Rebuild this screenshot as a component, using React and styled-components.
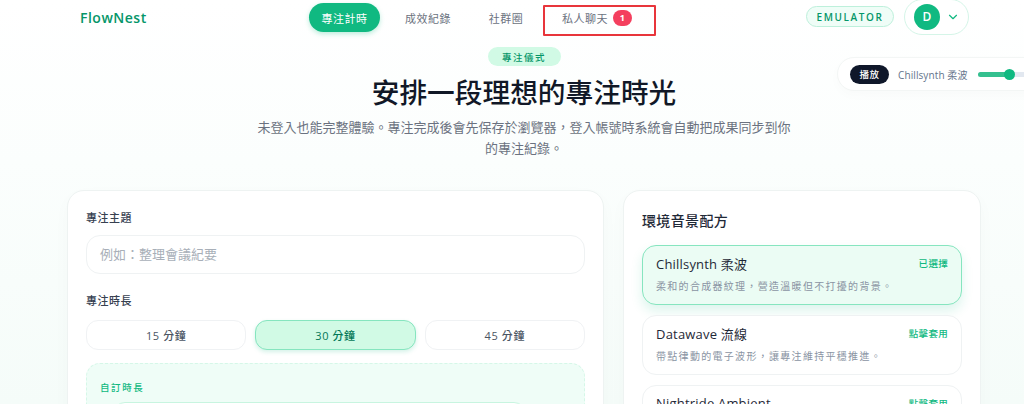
import React from 'react';
import styled, { createGlobalStyle } from 'styled-components';

const Global = createGlobalStyle`
  html, body { margin: 0; padding: 0; height: 404px; overflow: hidden; background: #fff; }
  * { box-sizing: border-box; }
  body { font-family: "Open Sans", "Noto Sans CJK TC", sans-serif; color: #1f2937; }
`;

const Page = styled.div`
  position: relative; width: 1024px; height: 404px; overflow: hidden;
  background: linear-gradient(180deg, #ffffff 0%, #fbfefd 40%, #f5fcf9 100%);
`;
const Header = styled.header`
  display: flex; align-items: center; height: 35px; padding: 0 55px 0 80px;
`;
const Logo = styled.div`
  width: 229px; font-size: 14px; font-weight: 600; color: #059669; letter-spacing: .5px;
`;
const Nav = styled.nav`display: flex; align-items: center; gap: 0;`;
const NavItem = styled.a`
  display: flex; align-items: center; justify-content: center; gap: 5px;
  height: 29px; border-radius: 15px; font-size: 11px; letter-spacing: .5px;
  width: ${p => p.$w}px; margin-right: ${p => p.$mr || 0}px;
  color: ${p => p.$active ? '#fff' : '#6b7280'};
  background: ${p => p.$active ? '#10b981' : 'transparent'};
  box-shadow: ${p => p.$active ? '0 2px 5px rgba(16,185,129,.28)' : 'none'};
`;
const Count = styled.span`
  width: 19px; height: 16px; border-radius: 8px; background: #f43f5e; color: #fff;
  font-size: 9px; font-weight: 700; display: flex; align-items: center; justify-content: center;
`;
const Right = styled.div`display: flex; align-items: center; gap: 10px; margin-left: auto;`;
const Emulator = styled.div`
  height: 21px; width: 88px; margin-top: -2px; display: flex; align-items: center; justify-content: center;
  border: 1px solid #bdf0db; border-radius: 11px; background: #effdf7;
  color: #059669; font-size: 10px; font-weight: 600; letter-spacing: 1.6px;
`;
const UserButton = styled.div`
  height: 36px; width: 65px; margin-top: -1px; border: 1px solid #d5f5e8; border-radius: 18px; background: #fff;
  display: flex; align-items: center; gap: 6px; padding-left: 9px; color: #10b981;
`;
const Avatar = styled.div`
  width: 26px; height: 26px; margin-top: -1px; border-radius: 50%; background: #10b981; color: #fff;
  display: flex; align-items: center; justify-content: center; font-size: 12px; font-weight: 600;
`;
const Marker = styled.div`
  position: absolute; left: 543px; top: 5px; width: 113px; height: 31px;
  border: 2px solid #e8353b; border-radius: 1px;
`;
const Player = styled.div`
  position: absolute; left: 837px; top: 57px; width: 240px; height: 34px;
  display: flex; align-items: center; padding-left: 12px; gap: 9px;
  border: 1px solid #f3f6f5; border-radius: 17px; background: #fff;
  box-shadow: 0 4px 12px rgba(15,23,42,.02);
`;
const PlayButton = styled.div`
  width: 39px; height: 19px; border-radius: 10px; background: #0f172a; color: #fff;
  display: flex; align-items: center; justify-content: center; font-size: 9.5px; font-weight: 500; letter-spacing: .5px;
`;
const PlayerName = styled.span`width: 71px; font-size: 10px; letter-spacing: .1px; color: #64748b; white-space: nowrap;`;
const Track = styled.div`
  position: relative; width: 90px; height: 5px; border-radius: 3px; background: #e2e8f0; flex: none;
  &::before { content: ""; position: absolute; left: 0; top: 0; bottom: 0; width: 32px; border-radius: 3px; background: #34c08f; }
  &::after { content: ""; position: absolute; left: 26px; top: -3px; width: 11px; height: 11px; border-radius: 50%; background: #10b981; }
`;
const Hero = styled.section`
  display: flex; flex-direction: column; align-items: center; padding: 12px 0 0 24px;
`;
const Pill = styled.div`
  width: 73px; height: 19px; border-radius: 10px; background: #d1fae5; color: #059669;
  display: flex; align-items: center; justify-content: center; font-size: 9.5px; font-weight: 500; letter-spacing: 1.5px;
`;
const Title = styled.h1`
  margin: 6px 0 0; font-size: 27.7px; line-height: 40px; font-weight: 500; color: #111827;
`;
const Lead = styled.p`
  margin: 5px 0 0; width: 540px; text-align: center; font-size: 13px; line-height: 20.5px; color: #6b7280;
`;
const Columns = styled.main`
  display: grid; grid-template-columns: 537px 358px; gap: 19px; padding: 0 0 0 67px; margin-top: 32px;
`;
const Card = styled.div`
  height: 300px; border: 1px solid #eef3f2; border-radius: 17px; background: #fff;
  padding: ${p => p.$pad};
  box-shadow: 0 6px 18px rgba(15,23,42,.025);
`;
const Label = styled.div`
  font-size: 11px; line-height: 16px; font-weight: 500; color: #374151; letter-spacing: .5px;
  margin-bottom: ${p => p.$mb}px;
`;
const Input = styled.div`
  height: 39px; border: 1px solid #eff2f3; border-radius: 14px; padding: 0 0 2px 13px;
  display: flex; align-items: center; font-size: 13px; color: #a8afb8;
  margin-bottom: 19px;
`;
const Durations = styled.div`display: grid; grid-template-columns: repeat(3, 1fr); gap: 9px;`;
const Duration = styled.div`
  height: 30px; border-radius: 12px; font-size: 11px; letter-spacing: .6px; font-weight: 500;
  display: flex; align-items: center; justify-content: center;
  border: 1px solid ${p => p.$on ? '#86e5bf' : '#f0f2f4'};
  background: ${p => p.$on ? '#d1fae5' : '#fff'};
  color: ${p => p.$on ? '#047857' : '#4b5563'};
  box-shadow: ${p => p.$on ? '0 2px 4px rgba(16,185,129,.18)' : 'none'};
`;
const Custom = styled.div`
  margin-top: 13px; height: 120px; border: 1px dashed #d5f7e8; border-radius: 14px;
  background: #effdf7; padding: 17px 13px;
`;
const CustomLabel = styled.div`font-size: 9.5px; line-height: 14px; font-weight: 500; color: #10b981; letter-spacing: 1.6px;`;
const CustomField = styled.div`
  margin-top: 7px; margin-left: 13px; height: 40px; width: 413px; border: 1px solid #c8f5e0; border-radius: 12px; background: #fff;
`;
const SideTitle = styled.h2`
  margin: 0 0 14px; font-size: 14px; line-height: 20px; font-weight: 500; color: #1f2937; letter-spacing: .35px;
`;
const Recipes = styled.div`display: flex; flex-direction: column; gap: 10px;`;
const Recipe = styled.div`
  height: 60px; border-radius: 14px; padding: 7px 13px;
  border: 1px solid ${p => p.$on ? '#86e5bf' : '#eff2f3'};
  background: ${p => p.$on ? '#ebfcf4' : '#fff'};
  box-shadow: ${p => p.$on ? '0 6px 12px rgba(16,185,129,.14)' : 'none'};
`;
const RecipeTop = styled.div`display: flex; justify-content: space-between; align-items: center; height: 20px;`;
const RecipeName = styled.span`font-size: 13px; font-weight: 400; color: #1f2937; letter-spacing: .2px;`;
const RecipeState = styled.span`font-size: 9.5px; font-weight: 500; color: #10b981; letter-spacing: .3px;`;
const RecipeText = styled.div`margin-top: 6px; font-size: 10px; line-height: 15px; color: #8a94a3; letter-spacing: 1.3px; white-space: nowrap;`;

const recipes = [
  { name: 'Chillsynth 柔波', state: '已選擇', text: '柔和的合成器紋理，營造溫暖但不打擾的背景。', on: true },
  { name: 'Datawave 流線', state: '點擊套用', text: '帶點律動的電子波形，讓專注維持平穩推進。' },
  { name: 'Nightride Ambient', state: '點擊套用', text: '' },
];

export default function App() {
  return (
    <Page>
      <Global />
      <Header>
        <Logo>FlowNest</Logo>
        <Nav>
          <NavItem $active $w={71} $mr={14}>專注計時</NavItem>
          <NavItem $w={68} $mr={16}>成效紀錄</NavItem>
          <NavItem $w={56} $mr={18}>社群圈</NavItem>
          <NavItem $w={90}>私人聊天<Count>1</Count></NavItem>
        </Nav>
        <Right>
          <Emulator>EMULATOR</Emulator>
          <UserButton>
            <Avatar>D</Avatar>
            <svg width="14" height="14" viewBox="0 0 24 24" fill="none" stroke="currentColor" strokeWidth="2" strokeLinecap="round" strokeLinejoin="round"><path d="m6 9 6 6 6-6" /></svg>
          </UserButton>
        </Right>
      </Header>
      <Marker />
      <Player>
        <PlayButton>播放</PlayButton>
        <PlayerName>Chillsynth 柔波</PlayerName>
        <Track />
      </Player>
      <Hero>
        <Pill>專注儀式</Pill>
        <Title>安排一段理想的專注時光</Title>
        <Lead>未登入也能完整體驗。專注完成後會先保存於瀏覽器，登入帳號時系統會自動把成果同步到你的專注紀錄。</Lead>
      </Hero>
      <Columns>
        <Card $pad="19px 18px">
          <Label $mb={9}>專注主題</Label>
          <Input>例如：整理會議紀要</Input>
          <Label $mb={11}>專注時長</Label>
          <Durations>
            <Duration>15 分鐘</Duration>
            <Duration $on>30 分鐘</Duration>
            <Duration>45 分鐘</Duration>
          </Durations>
          <Custom>
            <CustomLabel>自訂時長</CustomLabel>
            <CustomField />
          </Custom>
        </Card>
        <Card $pad="20px 18px">
          <SideTitle>環境音景配方</SideTitle>
          <Recipes>
            {recipes.map(r => (
              <Recipe key={r.name} $on={r.on}>
                <RecipeTop>
                  <RecipeName>{r.name}</RecipeName>
                  <RecipeState>{r.state}</RecipeState>
                </RecipeTop>
                <RecipeText>{r.text}</RecipeText>
              </Recipe>
            ))}
          </Recipes>
        </Card>
      </Columns>
    </Page>
  );
}
